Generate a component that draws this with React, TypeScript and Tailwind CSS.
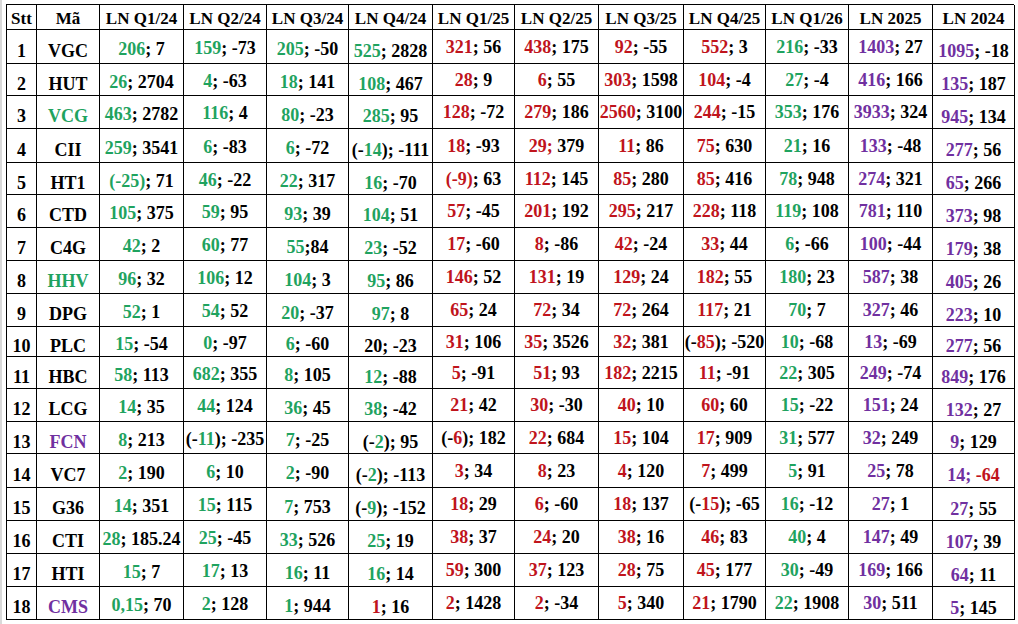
import React from "react";

const headers = [
  "Stt",
  "Mã",
  "LN Q1/24",
  "LN Q2/24",
  "LN Q3/24",
  "LN Q4/24",
  "LN Q1/25",
  "LN Q2/25",
  "LN Q3/25",
  "LN Q4/25",
  "LN Q1/26",
  "LN 2025",
  "LN 2024",
];

const GREEN = "text-[#1fa35f]";
const RED = "text-[#c0141c]";
const PURPLE = "text-[#7030a0]";

// colour used for {..} parts in each data column (index 2..12)
const colColor = [
  "", "", GREEN, GREEN, GREEN, GREEN, RED, RED, RED, RED, GREEN, PURPLE, PURPLE,
];

// small vertical shifts, like the Excel sheet (text sits lower in some columns)
const colShift = [
  "pt-[8px]",
  "pt-[8px]",
  "pt-[4px]",
  "pt-[2px]",
  "pt-[5px]",
  "pt-[8px]",
  "pt-0",
  "pt-0",
  "pt-0",
  "pt-0",
  "pt-0",
  "pt-0",
  "pt-[9px]",
];

const rows: { code: string; codeColor?: string; cells: string[] }[] = [
  { code: "VGC", cells: ["{206}; 7", "{159}; -73", "{205}; -50", "{525}; 2828", "{321}; 56", "{438}; 175", "{92}; -55", "{552}; 3", "{216}; -33", "{1403}; 27", "{1095}; -18"] },
  { code: "HUT", cells: ["{26}; 2704", "{4}; -63", "{18}; 141", "{108}; 467", "{28}; 9", "{6}; 55", "{303}; 1598", "{104}; -4", "{27}; -4", "{416}; 166", "{135}; 187"] },
  { code: "VCG", codeColor: GREEN, cells: ["{463}; 2782", "{116}; 4", "{80}; -23", "{285}; 95", "{128}; -72", "{279}; 186", "{2560}; 3100", "{244}; -15", "{353}; 176", "{3933}; 324", "{945}; 134"] },
  { code: "CII", cells: ["{259}; 3541", "{6}; -83", "{6}; -72", "(-{14}); -111", "{18}; -93", "{29;} 379", "{11}; 86", "{75}; 630", "{21}; 16", "{133}; -48", "{277}; 56"] },
  { code: "HT1", cells: ["{(-25)}; 71", "{46}; -22", "{22}; 317", "{16}; -70", "{(-9)}; 63", "{112}; 145", "{85}; 280", "{85}; 416", "{78}; 948", "{274}; 321", "{65}; 266"] },
  { code: "CTD", cells: ["{105}; 375", "{59}; 95", "{93}; 39", "{104}; 51", "{57}; -45", "{201}; 192", "{295}; 217", "{228}; 118", "{119}; 108", "{781}; 110", "{373}; 98"] },
  { code: "C4G", cells: ["{42}; 2", "{60}; 77", "{55};84", "{23}; -52", "{17}; -60", "{8}; -86", "{42}; -24", "{33}; 44", "{6}; -66", "{100}; -44", "{179}; 38"] },
  { code: "HHV", codeColor: GREEN, cells: ["{96}; 32", "{106}; 12", "{104}; 3", "{95}; 86", "{146}; 52", "{131}; 19", "{129}; 24", "{182}; 55", "{180}; 23", "{587}; 38", "{405}; 26"] },
  { code: "DPG", cells: ["{52}; 1", "{54}; 52", "{20}; -37", "{97}; 8", "{65}; 24", "{72}; 34", "{72}; 264", "{117}; 21", "{70}; 7", "{327}; 46", "{223}; 10"] },
  { code: "PLC", cells: ["{15}; -54", "{0}; -97", "{6}; -60", "20; -23", "{31}; 106", "{35}; 3526", "{32}; 381", "(-{85}); -520", "{10}; -68", "{13}; -69", "{277}; 56"] },
  { code: "HBC", cells: ["{58}; 113", "{682}; 355", "{8}; 105", "{12}; -88", "{5}; -91", "{51}; 93", "{182}; 2215", "{11}; -91", "{22}; 305", "{249}; -74", "{849}; 176"] },
  { code: "LCG", cells: ["{14}; 35", "{44}; 124", "{36}; 45", "{38}; -42", "{21}; 42", "{30}; -30", "{40}; 10", "{60}; 60", "{15}; -22", "{151}; 24", "{132}; 27"] },
  { code: "FCN", codeColor: PURPLE, cells: ["{8}; 213", "(-{11}); -235", "{7}; -25", "(-{2}); 95", "(-{6}); 182", "{22}; 684", "{15}; 104", "{17}; 909", "{31}; 577", "{32}; 249", "{9}; 129"] },
  { code: "VC7", cells: ["{2}; 190", "{6}; 10", "{2}; -90", "(-{2}); -113", "{3}; 34", "{8}; 23", "{4}; 120", "{7}; 499", "{5}; 91", "{25}; 78", "{14; }[-64]"] },
  { code: "G36", cells: ["{14}; 351", "{15}; 115", "{7}; 753", "(-{9}); -152", "{18}; 29", "{6}; -60", "{18}; 137", "(-{15}); -65", "{16}; -12", "{27}; 1", "{27}; 55"] },
  { code: "CTI", cells: ["{28}; 185.24", "{25}; -45", "{33}; 526", "{25}; 19", "{38}; 37", "{24}; 20", "{38}; 16", "{46}; 83", "{40}; 4", "{147}; 49", "{107}; 39"] },
  { code: "HTI", cells: ["{15}; 7", "{17}; 13", "{16}; 11", "{16}; 14", "{59}; 300", "{37}; 123", "{28}; 75", "{45}; 177", "{30}; -49", "{169}; 166", "{64}; 11"] },
  { code: "CMS", codeColor: PURPLE, cells: ["{0,15}; 70", "{2}; 128", "{1}; 944", "[1]; 16", "{2}; 1428", "{2}; -34", "{5}; 340", "{21}; 1790", "{22}; 1908", "{30}; 511", "{5}; 145"] },
];

function Cell({ text, color }: { text: string; color: string }) {
  const parts = text.split(/(\{[^}]*\}|\[[^\]]*\])/).filter(Boolean);
  return (
    <span className="whitespace-pre">
      {parts.map((p, i) => {
        if (p.startsWith("{")) return <span key={i} className={color}>{p.slice(1, -1)}</span>;
        if (p.startsWith("[")) return <span key={i} className={RED}>{p.slice(1, -1)}</span>;
        return <span key={i}>{p}</span>;
      })}
    </span>
  );
}

export default function App() {
  return (
    <div className="w-[1018px] h-[624px] bg-white overflow-hidden border-l-2 border-[#d9d9d9] pl-[4px] pt-[4px] font-['Liberation_Serif',serif] font-bold text-[18px] leading-[20px] text-black">
      <div className="grid grid-cols-[30px_63px_84px_83px_82px_84px_82px_84px_85px_82px_83px_84px_82px] grid-rows-[25px_34px_32px_33px_34px_32px_33px_33px_33px_33px_30px_32px_33px_32px_34px_33px_33px_33px_33px] w-[1008px] border-l border-t border-black">
        {headers.map((h) => (
          <div key={h} className="flex items-center justify-center whitespace-nowrap border-r border-b border-black pt-[3px] text-[17px]">
            {h}
          </div>
        ))}
        {rows.map((r, ri) => (
          <React.Fragment key={r.code}>
            <div className={`flex items-center justify-center border-r border-b border-black ${colShift[0]}`}>{ri + 1}</div>
            <div className={`flex items-center justify-center border-r border-b border-black ${colShift[1]} ${r.codeColor ?? ""}`}>{r.code}</div>
            {r.cells.map((c, ci) => (
              <div
                key={ci}
                className={`flex items-center justify-center whitespace-nowrap border-r border-b border-black ${colShift[ci + 2]}`}
              >
                <Cell text={c} color={colColor[ci + 2]} />
              </div>
            ))}
          </React.Fragment>
        ))}
      </div>
    </div>
  );
}
